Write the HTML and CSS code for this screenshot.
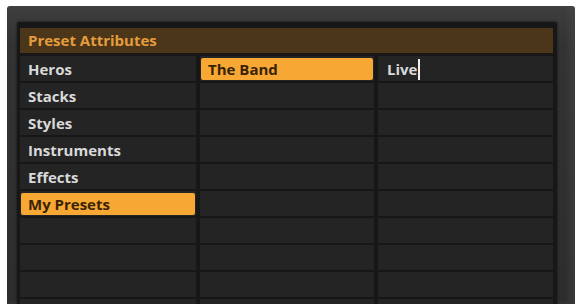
FILE: index.html
```html
<!DOCTYPE html>
<html lang="en">
<head>
    <meta charset="UTF-8">
    <meta name="viewport" content="width=device-width, initial-scale=1.0">
    <title>Preset Attributes</title>
    <link rel="stylesheet" href="styles.css">
</head>
<body>
    <div class="frame">
        <div class="panel">
            <div class="panel-header">Preset Attributes</div>
            <div class="columns">
                <ul class="column">
                    <li class="cell">Heros</li>
                    <li class="cell">Stacks</li>
                    <li class="cell">Styles</li>
                    <li class="cell">Instruments</li>
                    <li class="cell">Effects</li>
                    <li class="cell selected">My Presets</li>
                    <li class="cell"></li>
                    <li class="cell"></li>
                    <li class="cell"></li>
                    <li class="cell"></li>
                </ul>
                <ul class="column">
                    <li class="cell selected">The Band</li>
                    <li class="cell"></li>
                    <li class="cell"></li>
                    <li class="cell"></li>
                    <li class="cell"></li>
                    <li class="cell"></li>
                    <li class="cell"></li>
                    <li class="cell"></li>
                    <li class="cell"></li>
                    <li class="cell"></li>
                </ul>
                <ul class="column last">
                    <li class="cell editing">Live<span class="caret"></span></li>
                    <li class="cell"></li>
                    <li class="cell"></li>
                    <li class="cell"></li>
                    <li class="cell"></li>
                    <li class="cell"></li>
                    <li class="cell"></li>
                    <li class="cell"></li>
                    <li class="cell"></li>
                    <li class="cell"></li>
                </ul>
            </div>
        </div>
    </div>
</body>
</html>
```

FILE: styles.css
```css
html, body {
    margin: 0;
    padding: 0;
    background-color: #ffffff;
    overflow: hidden;
}
body {
    font-family: "Open Sans", "DejaVu Sans", sans-serif;
    height: 304px;
}
.frame {
    margin: 6px 4px 0 7px;
    height: 298px;
    padding: 16px 18px 0 10px;
    box-sizing: border-box;
    background: linear-gradient(to bottom, #3e3e3e 0px, #333333 40px, #2d2d2d 100%);
    border-radius: 3px 3px 0 0;
    box-shadow: inset -6px 0 6px rgba(80,80,80,0.35);
}
.panel {
    height: 100%;
    background-color: #171717;
    padding: 6px 4px 0 3px;
    box-sizing: border-box;
    border-radius: 2px 2px 0 0;
    box-shadow: 0 0 3px rgba(0,0,0,0.6);
    overflow: hidden;
}
.panel-header {
    height: 25px;
    line-height: 25px;
    background-color: #4b361a;
    color: #e59c3c;
    font-weight: bold;
    font-size: 15px;
    padding-left: 8px;
}
.columns {
    display: grid;
    grid-template-columns: 176px 174px 175px;
    column-gap: 4px;
    margin-top: 3px;
}
.column {
    list-style: none;
    margin: 0;
    padding: 0;
    display: flex;
    flex-direction: column;
    gap: 2px;
}
.cell {
    height: 25px;
    line-height: 26px;
    background-color: #242424;
    color: #d9d9d9;
    font-weight: bold;
    font-size: 15px;
    padding-left: 8px;
    box-sizing: border-box;
    position: relative;
}
.column.last .cell {
    padding-left: 9px;
}
.cell.selected {
    color: #3a2303;
    z-index: 0;
}
.cell.selected::before {
    content: "";
    position: absolute;
    left: 1px;
    right: 1px;
    top: 2px;
    bottom: 1px;
    background-color: #f7a834;
    border-radius: 2px;
    z-index: -1;
}
.caret {
    display: inline-block;
    width: 2px;
    height: 21px;
    background-color: #f0f0f0;
    vertical-align: middle;
    margin-left: 1px;
    margin-top: -2px;
}
```
